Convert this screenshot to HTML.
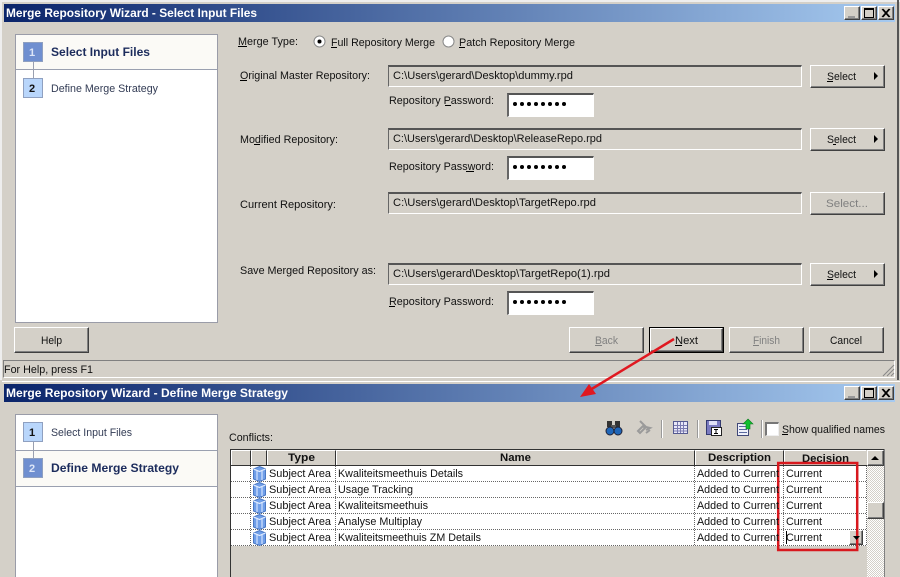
<!DOCTYPE html>
<html><head><meta charset="utf-8"><style>
html,body{margin:0;padding:0;background:#d4d0c8}
#p{position:relative;width:900px;height:577px;overflow:hidden;background:#d4d0c8}
#p div{position:absolute;box-sizing:border-box}
.tb{left:4px;width:891px;height:18px;background:linear-gradient(90deg,#0a246a,#a6caf0)}
.panel{left:15px;width:203px;background:#fff;border:1px solid #9a9ca8}
.act{background:#fbfaf6;left:16px;width:201px}
.ln{background:#9aa0b0}
.b1{width:20px;height:20px;background:#6f8fd0;border:1px solid #8fa0c0}
.b2{width:20px;height:20px;background:#b9d6fb;border:1px solid #8fa0c0}
.btn{background:#d4d0c8;border:1px solid;border-color:#fff #404040 #404040 #fff;box-shadow:inset -1px -1px 0 #808080}
.def{outline:1px solid #000;border-color:#fff #404040 #404040 #fff}
.wb{width:16px;height:14px;background:#d4d0c8;border:1px solid;border-color:#fff #404040 #404040 #fff;box-shadow:inset -1px -1px 0 #808080}
.fld{left:388px;width:414px;height:22px;background:#d4d0c8;border:1px solid #fff;border-top:2px solid #555;border-left:1px solid #666}
.pw{left:507px;width:87px;height:24px;background:#fff;border:1px solid #fff;border-top:2px solid #555;border-left:2px solid #666}
.hd{top:450px;height:16px;background:#d4d0c8;border-right:1px solid #333;border-top:1px solid #fff;border-left:1px solid #fff}
svg{position:absolute;left:0;top:0}
text{font-family:"Liberation Sans",sans-serif;font-size:11px;fill:#111}
.h{font-weight:bold;fill:#fff;font-size:12px}
.s{font-weight:bold;fill:#1c2c5c;font-size:11.5px}
.n{fill:#333c55;font-size:11px}
.d{fill:#808080}
.th{font-weight:bold;font-size:11px}
</style></head><body><div id="p">

<div style="left:0;top:0;width:900px;height:2px;background:#eee"></div>
<div style="left:897px;top:0;width:2px;height:380px;background:#555"></div>
<div style="left:0;top:2px;width:2px;height:378px;background:#eee"></div>

<div class="tb" style="top:4px"></div>
<div class="wb" style="left:844px;top:6px"></div>
<div class="wb" style="left:861px;top:6px"></div>
<div class="wb" style="left:878px;top:6px"></div>
<div style="left:848px;top:16px;width:7px;height:2px;background:#999"></div>
<div style="left:864px;top:8px;width:10px;height:10px;border:1px solid #000;border-top-width:2px"></div>

<div class="panel" style="top:34px;height:289px"></div>
<div class="act" style="top:35px;height:34px"></div>
<div class="ln" style="left:16px;top:69px;width:201px;height:1px"></div>
<div class="ln" style="left:33px;top:60px;width:1px;height:20px"></div>
<div class="b1" style="left:23px;top:42px"></div>
<div class="b2" style="left:23px;top:78px"></div>

<div class="fld" style="top:65px"></div>
<div class="fld" style="top:128px"></div>
<div class="fld" style="top:192px"></div>
<div class="fld" style="top:263px"></div>
<div class="pw" style="top:93px"></div>
<div class="pw" style="top:156px"></div>
<div class="pw" style="top:291px"></div>
<div class="btn" style="left:810px;top:65px;width:75px;height:23px"></div>
<div class="btn" style="left:810px;top:128px;width:75px;height:23px"></div>
<div class="btn" style="left:810px;top:192px;width:75px;height:23px"></div>
<div class="btn" style="left:810px;top:263px;width:75px;height:23px"></div>

<div class="btn" style="left:14px;top:327px;width:75px;height:26px"></div>
<div class="btn" style="left:569px;top:327px;width:75px;height:26px"></div>
<div class="btn def" style="left:650px;top:328px;width:73px;height:24px"></div>
<div class="btn" style="left:729px;top:327px;width:75px;height:26px"></div>
<div class="btn" style="left:809px;top:327px;width:75px;height:26px"></div>

<div style="left:3px;top:360px;width:892px;height:18px;border:1px solid #fff;border-top-color:#808080;border-left-color:#808080"></div>

<div style="left:2px;top:381px;width:898px;height:1px;background:#fff"></div>
<div class="tb" style="top:384px"></div>
<div class="wb" style="left:844px;top:386px"></div>
<div class="wb" style="left:861px;top:386px"></div>
<div class="wb" style="left:878px;top:386px"></div>
<div style="left:848px;top:396px;width:7px;height:2px;background:#999"></div>
<div style="left:864px;top:388px;width:10px;height:10px;border:1px solid #000;border-top-width:2px"></div>

<div class="panel" style="top:414px;height:170px"></div>
<div class="act" style="top:451px;height:35px"></div>
<div class="ln" style="left:16px;top:450px;width:201px;height:1px"></div>
<div class="ln" style="left:16px;top:486px;width:201px;height:1px"></div>
<div class="ln" style="left:33px;top:442px;width:1px;height:16px"></div>
<div class="b2" style="left:23px;top:422px"></div>
<div class="b1" style="left:23px;top:458px"></div>

<div style="left:661px;top:420px;width:2px;height:18px;background:#fff;border-left:1px solid #999"></div>
<div style="left:697px;top:420px;width:2px;height:18px;background:#fff;border-left:1px solid #999"></div>
<div style="left:761px;top:420px;width:2px;height:18px;background:#fff;border-left:1px solid #999"></div>
<div style="left:765px;top:422px;width:14px;height:14px;background:#fff;border:2px solid #777;border-right:1px solid #eee;border-bottom:1px solid #eee"></div>

<div style="left:230px;top:449px;width:655px;height:128px;background:#d4d0c8;border:1px solid #333;border-right:0;border-bottom:0"></div>
<div class="hd" style="left:231px;width:20px"></div>
<div class="hd" style="left:251px;width:16px"></div>
<div class="hd" style="left:267px;width:69px"></div>
<div class="hd" style="left:336px;width:359px"></div>
<div class="hd" style="left:695px;width:89px"></div>
<div class="hd" style="left:784px;width:82px;border-right:0"></div>
<div style="left:231px;top:465px;width:636px;height:1px;background:#333"></div>
<div style="left:231px;top:466px;width:636px;height:80px;background:#fff"></div>
<div style="left:867px;top:450px;width:17px;height:127px;background:repeating-conic-gradient(#d4d0c8 0 25%,#fff 0 50%) 0 0/2px 2px"></div>
<div class="btn" style="left:867px;top:450px;width:17px;height:16px"></div>
<div class="btn" style="left:867px;top:502px;width:17px;height:17px"></div>
<div style="left:884px;top:449px;width:1px;height:128px;background:#808080"></div>
<div class="btn" style="left:849px;top:530px;width:14px;height:15px"></div>

<svg width="900" height="577" viewBox="0 0 900 577">
<defs>
<symbol id="cube" viewBox="0 0 15 16" overflow="visible">
<path d="M7.500 .5 L13.500 3 V13 L7.500 15.500 L1.500 13 V3Z" fill="#6f9ee8" stroke="#4a78c4" stroke-width="1"/>
<path d="M1.500 3 L7.500 5.500 L13.500 3" fill="none" stroke="#e4eeff" stroke-width="1.200"/>
<path d="M5 5 V14 M10 5 V14" fill="none" stroke="#d4e4ff" stroke-width="1.200"/>
</symbol>
</defs>

<!-- title bars -->
<text class="h" x="6" y="17" textLength="251" lengthAdjust="spacingAndGlyphs">Merge Repository Wizard - Select Input Files</text>
<text class="h" x="6" y="397" textLength="282" lengthAdjust="spacingAndGlyphs">Merge Repository Wizard - Define Merge Strategy</text>
<path d="M882 9l7 8M889 9l-7 8M883 9l7 8M890 9l-7 8" stroke="#000" stroke-width="1"/>
<path d="M882 389l7 8M889 389l-7 8M883 389l7 8M890 389l-7 8" stroke="#000" stroke-width="1"/>

<!-- wizard steps -->
<text x="29" y="56" style="fill:#dde6f8;font-weight:bold;font-size:11px">1</text>
<text x="29" y="92" style="font-weight:bold;font-size:11px">2</text>
<text class="s" x="51" y="56" textLength="99" lengthAdjust="spacingAndGlyphs">Select Input Files</text>
<text class="n" x="51" y="92" textLength="107" lengthAdjust="spacingAndGlyphs">Define Merge Strategy</text>
<text x="29" y="436" style="font-weight:bold;font-size:11px">1</text>
<text x="29" y="472" style="fill:#dde6f8;font-weight:bold;font-size:11px">2</text>
<text class="n" x="51" y="436" textLength="81" lengthAdjust="spacingAndGlyphs">Select Input Files</text>
<text class="s" x="51" y="472" textLength="128" lengthAdjust="spacingAndGlyphs">Define Merge Strategy</text>

<!-- form -->
<text x="238" y="45" textLength="60" lengthAdjust="spacingAndGlyphs">Merge Type:</text><path d="M238 46.500h9" stroke="#000"/>
<circle cx="319.500" cy="41.500" r="5.500" fill="#fff" stroke="#888"/><circle cx="319.500" cy="41.500" r="2" fill="#000"/>
<text x="331" y="46" textLength="104" lengthAdjust="spacingAndGlyphs">Full Repository Merge</text><path d="M331 47.500h6" stroke="#000"/>
<circle cx="448.500" cy="41.500" r="5.500" fill="#fff" stroke="#888"/>
<text x="459" y="46" textLength="116" lengthAdjust="spacingAndGlyphs">Patch Repository Merge</text><path d="M459 47.500h6" stroke="#000"/>

<text x="240" y="79" textLength="130" lengthAdjust="spacingAndGlyphs">Original Master Repository:</text><path d="M240 80.500h7" stroke="#000"/>
<text x="393" y="79" textLength="180" lengthAdjust="spacingAndGlyphs">C:\Users\gerard\Desktop\dummy.rpd</text>
<text x="389" y="104" textLength="105" lengthAdjust="spacingAndGlyphs">Repository Password:</text><path d="M445 105.500h6" stroke="#000"/>
<text x="240" y="143" textLength="98" lengthAdjust="spacingAndGlyphs">Modified Repository:</text><path d="M254 144.500h6" stroke="#000"/>
<text x="393" y="142" textLength="209" lengthAdjust="spacingAndGlyphs">C:\Users\gerard\Desktop\ReleaseRepo.rpd</text>
<text x="389" y="170" textLength="105" lengthAdjust="spacingAndGlyphs">Repository Password:</text><path d="M466 171.500h8" stroke="#000"/>
<text x="240" y="208" textLength="96" lengthAdjust="spacingAndGlyphs">Current Repository:</text>
<text x="393" y="206" textLength="203" lengthAdjust="spacingAndGlyphs">C:\Users\gerard\Desktop\TargetRepo.rpd</text>
<text x="240" y="274" textLength="136" lengthAdjust="spacingAndGlyphs">Save Merged Repository as:</text>
<text x="393" y="277" textLength="217" lengthAdjust="spacingAndGlyphs">C:\Users\gerard\Desktop\TargetRepo(1).rpd</text>
<text x="389" y="305" textLength="105" lengthAdjust="spacingAndGlyphs">Repository Password:</text><path d="M389 306.500h6" stroke="#000"/>

<g fill="#000">
<g id="dots"><circle cx="515" cy="104" r="2"/><circle cx="522" cy="104" r="2"/><circle cx="529" cy="104" r="2"/><circle cx="536" cy="104" r="2"/><circle cx="543" cy="104" r="2"/><circle cx="550" cy="104" r="2"/><circle cx="557" cy="104" r="2"/><circle cx="564" cy="104" r="2"/></g>
<use href="#dots" y="63"/><use href="#dots" y="198"/>
</g>

<!-- select buttons -->
<text x="827" y="80" textLength="29" lengthAdjust="spacingAndGlyphs">Select</text><path d="M827 81.500h6" stroke="#000"/><path d="M874 72v8l4-4z" fill="#000"/>
<text x="827" y="143" textLength="29" lengthAdjust="spacingAndGlyphs">Select</text><path d="M833 144.500h3" stroke="#000"/><path d="M874 135v8l4-4z" fill="#000"/>
<text class="d" x="826" y="207" textLength="42" lengthAdjust="spacingAndGlyphs" style="fill:#808080">Select...</text>
<text x="827" y="278" textLength="29" lengthAdjust="spacingAndGlyphs">Select</text><path d="M827 279.500h6" stroke="#000"/><path d="M874 270v8l4-4z" fill="#000"/>

<!-- bottom buttons -->
<text x="41" y="344" textLength="21" lengthAdjust="spacingAndGlyphs">Help</text>
<text x="595" y="344" textLength="23" lengthAdjust="spacingAndGlyphs" style="fill:#808080">Back</text><path d="M595 345.500h7" stroke="#808080"/>
<text x="675" y="344" textLength="23" lengthAdjust="spacingAndGlyphs">Next</text><path d="M675 345.500h7" stroke="#000"/>
<text x="753" y="344" textLength="27" lengthAdjust="spacingAndGlyphs" style="fill:#808080">Finish</text><path d="M753 345.500h6" stroke="#808080"/>
<text x="830" y="344" textLength="32" lengthAdjust="spacingAndGlyphs">Cancel</text>

<text x="4" y="373" textLength="89" lengthAdjust="spacingAndGlyphs">For Help, press F1</text>
<path d="M883 376l11-11M887 376l7-7M891 376l3-3" stroke="#888" stroke-width="1"/>

<!-- toolbar -->
<text x="229" y="441" textLength="44" lengthAdjust="spacingAndGlyphs">Conflicts:</text>
<g>
<rect x="607" y="421" width="5" height="6" fill="#333"/><rect x="615" y="421" width="5" height="6" fill="#333"/>
<rect x="611" y="425" width="5" height="3" fill="#555"/>
<circle cx="610" cy="431" r="4" fill="#1f66b8" stroke="#223"/><circle cx="618" cy="431" r="4" fill="#1f66b8" stroke="#223"/>
</g>
<path d="M638 431l5-5 2 2-5 5zM640 421l6 6 4 1-4 2M646 433l4-3" fill="none" stroke="#9a9a9a" stroke-width="2"/>
<rect x="673.500" y="421.500" width="14" height="12" fill="#e8e8f8" stroke="#555a90"/>
<path d="M674 425.500h13M674 428.500h13M674 431h13M677.500 422v11M680.500 422v11M683.500 422v11" stroke="#7a7ab0"/>
<rect x="706.500" y="420.500" width="14" height="14" fill="#7a7ac0" stroke="#333a70"/>
<rect x="709" y="421" width="8" height="4" fill="#dfe0f5"/>
<rect x="711.500" y="427.500" width="10" height="8" fill="#fff" stroke="#222"/>
<path d="M714 429.500h4M716 429.500v4M714 433.500h4" stroke="#000"/>
<rect x="737.500" y="423.500" width="11" height="12" fill="#eef0fa" stroke="#404878"/>
<path d="M739 426.500h8M739 429.500h8M739 432.500h8" stroke="#5a6aa0"/>
<path d="M748 419l5 5h-3v5h-4v-5h-3z" fill="#10c030" stroke="#0a7a1c" stroke-width=".6"/>
<text x="782" y="433" textLength="103" lengthAdjust="spacingAndGlyphs">Show qualified names</text><path d="M782 434.500h6" stroke="#000"/>

<!-- table head -->
<text class="th" x="288" y="461" textLength="27" lengthAdjust="spacingAndGlyphs">Type</text>
<text class="th" x="500" y="461" textLength="31" lengthAdjust="spacingAndGlyphs">Name</text>
<text class="th" x="708" y="461" textLength="63" lengthAdjust="spacingAndGlyphs">Description</text>
<text class="th" x="802" y="462" textLength="47" lengthAdjust="spacingAndGlyphs">Decision</text>

<!-- dotted lines -->
<g stroke="#666" stroke-dasharray="1 1">
<path d="M231 481.500h636M231 497.500h636M231 513.500h636M231 529.500h636M231 545.500h636"/>
<path d="M250.500 466v80M335.500 466v80M694.500 466v80M783.500 466v80M866.500 466v80"/>
</g>

<use href="#cube" x="252" y="466" width="15" height="16"/>
<use href="#cube" x="252" y="482" width="15" height="16"/>
<use href="#cube" x="252" y="498" width="15" height="16"/>
<use href="#cube" x="252" y="514" width="15" height="16"/>
<use href="#cube" x="252" y="530" width="15" height="16"/>

<!-- highlight sits beneath the row text -->
<rect x="778.200" y="463" width="79" height="87" fill="none" stroke="#d8181e" stroke-width="2.500"/>

<g style="font-size:11px">
<text x="269" y="477" textLength="62" lengthAdjust="spacingAndGlyphs">Subject Area</text>
<text x="269" y="493" textLength="62" lengthAdjust="spacingAndGlyphs">Subject Area</text>
<text x="269" y="509" textLength="62" lengthAdjust="spacingAndGlyphs">Subject Area</text>
<text x="269" y="525" textLength="62" lengthAdjust="spacingAndGlyphs">Subject Area</text>
<text x="269" y="541" textLength="62" lengthAdjust="spacingAndGlyphs">Subject Area</text>
<text x="338" y="477" textLength="125" lengthAdjust="spacingAndGlyphs">Kwaliteitsmeethuis Details</text>
<text x="338" y="493" textLength="75" lengthAdjust="spacingAndGlyphs">Usage Tracking</text>
<text x="338" y="509" textLength="90" lengthAdjust="spacingAndGlyphs">Kwaliteitsmeethuis</text>
<text x="338" y="525" textLength="84" lengthAdjust="spacingAndGlyphs">Analyse Multiplay</text>
<text x="338" y="541" textLength="143" lengthAdjust="spacingAndGlyphs">Kwaliteitsmeethuis ZM Details</text>
<text x="697" y="477" textLength="82" lengthAdjust="spacingAndGlyphs">Added to Current</text>
<text x="697" y="493" textLength="82" lengthAdjust="spacingAndGlyphs">Added to Current</text>
<text x="697" y="509" textLength="82" lengthAdjust="spacingAndGlyphs">Added to Current</text>
<text x="697" y="525" textLength="82" lengthAdjust="spacingAndGlyphs">Added to Current</text>
<text x="697" y="541" textLength="82" lengthAdjust="spacingAndGlyphs">Added to Current</text>
<text x="786" y="477" textLength="36" lengthAdjust="spacingAndGlyphs">Current</text>
<text x="786" y="493" textLength="36" lengthAdjust="spacingAndGlyphs">Current</text>
<text x="786" y="509" textLength="36" lengthAdjust="spacingAndGlyphs">Current</text>
<text x="786" y="525" textLength="36" lengthAdjust="spacingAndGlyphs">Current</text>
<text x="786" y="541" textLength="36" lengthAdjust="spacingAndGlyphs">Current</text>
</g>
<path d="M786.500 531v13" stroke="#000"/>
<path d="M853 536h7l-3.500 4z" fill="#000"/>
<path d="M871 460h8l-4-4z" fill="#000"/>

<!-- annotation arrow -->
<path d="M674 339L590 390" stroke="#e01820" stroke-width="2.500" fill="none"/>
<path d="M580 397L589 384L596 394Z" fill="#e01820"/>
</svg>
</div></body></html>
